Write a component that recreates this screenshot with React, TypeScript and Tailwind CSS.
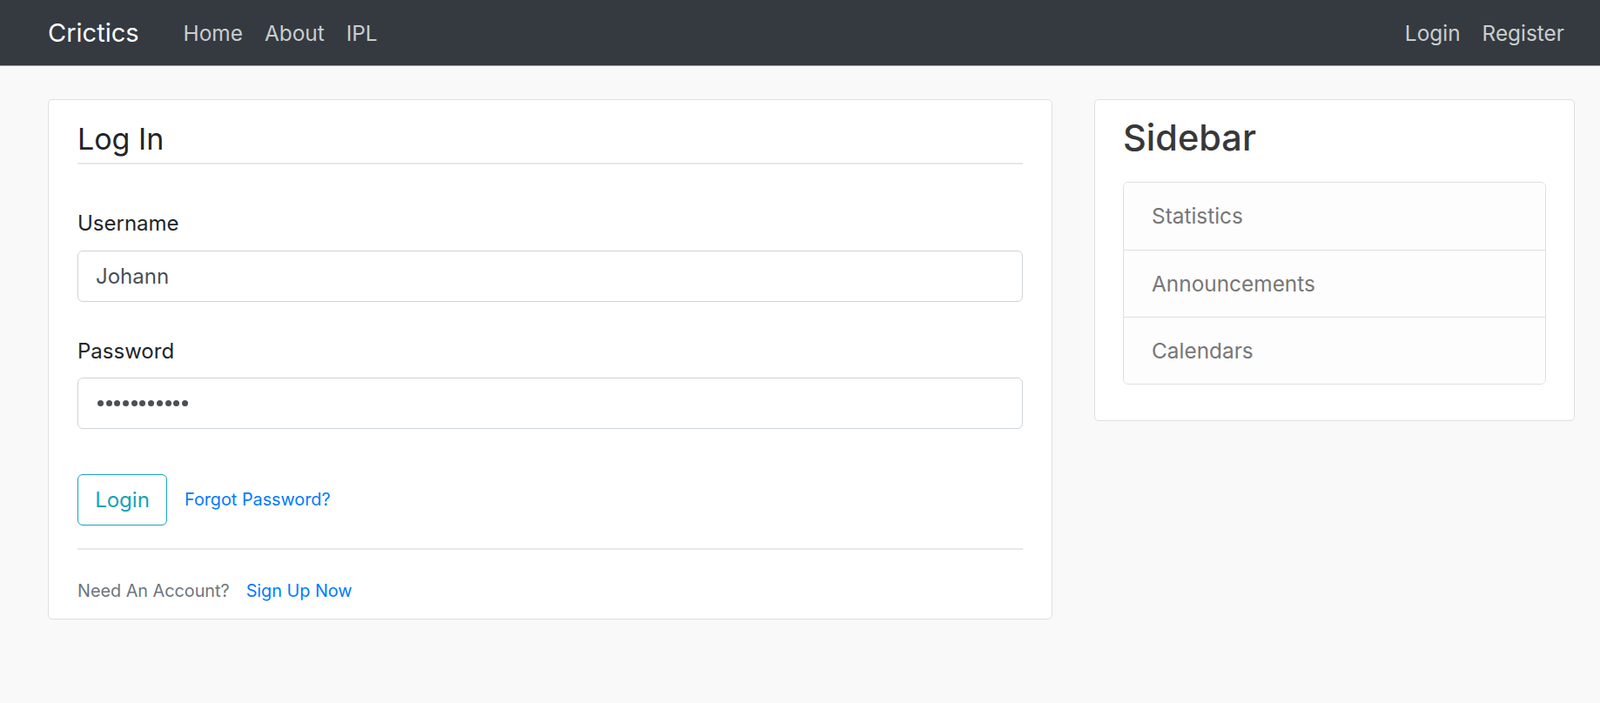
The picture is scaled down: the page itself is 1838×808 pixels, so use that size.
import React from 'react'

const font = { fontFamily: 'Inter, "Noto Sans", sans-serif' }

const navLinks = ['Home', 'About', 'IPL']
const sidebarItems = ['Statistics', 'Announcements', 'Calendars']

const Navbar = (): React.ReactNode => (
  <nav className="flex h-[76px] items-center justify-between border-b border-[#9a9da0] bg-[#343a40] pl-[55px] pr-[41px]">
    <div className="flex items-center">
      <span className="text-[29px] leading-[40px] text-white">Crictics</span>
      <div className="ml-[51px] flex items-center gap-[25px]">
        {navLinks.map((link) => (
          <a key={link} className="text-[24.4px] leading-[34px] text-[#cbcdce]" href="#">
            {link}
          </a>
        ))}
      </div>
    </div>
    <div className="flex items-center gap-[25px]">
      <a className="text-[24.4px] leading-[34px] text-[#cbcdce]" href="#">
        Login
      </a>
      <a className="text-[24.4px] leading-[34px] text-[#cbcdce]" href="#">
        Register
      </a>
    </div>
  </nav>
)

const PasswordDots = ({ count }: { count: number }): React.ReactNode => (
  <div className="flex items-center gap-[2.7px]">
    {Array.from({ length: count }).map((_, index) => (
      <span key={index} className="h-[7px] w-[7px] rounded-full bg-[#495057]" />
    ))}
  </div>
)

const LoginCard = (): React.ReactNode => (
  <div className="w-[1154px] rounded-[5px] border border-[#dfdfdf] bg-white px-[33px] pt-[23px] pb-[17px]">
    <div className="border-b-2 border-[#e7e8ea] pb-[5px] text-[34px] leading-[44px] text-[#212529]">Log In</div>
    <form>
      <label className="mt-[51px] block text-[24px] leading-[34px] text-[#212529]">Username</label>
      <input
        className="mt-[14px] block h-[59px] w-full rounded-[6px] border border-[#ced4da] px-[20px] text-[24px] text-[#495057] outline-none"
        defaultValue="Johann"
        type="text"
      />
      <label className="mt-[40px] block text-[24px] leading-[34px] text-[#212529]">Password</label>
      <div className="mt-[13px] flex h-[59px] w-full items-center rounded-[6px] border border-[#ced4da] px-[22px]">
        <PasswordDots count={11} />
      </div>
      <div className="mt-[52px] flex items-center">
        <button
          className="h-[59px] w-[103px] rounded-[6px] border border-[#17a2b8] text-[24px] text-[#17a2b8]"
          type="button"
        >
          Login
        </button>
        <a className="ml-[20px] text-[19.8px] text-[#007bff]" href="#">
          Forgot Password?
        </a>
      </div>
    </form>
    <div className="mt-[26px] border-t-2 border-[#e7e8ea]" />
    <div className="mt-[32px] flex items-center text-[19.8px] leading-[30px]">
      <span className="text-[#6c757d]">Need An Account?</span>
      <a className="ml-[19px] text-[#007bff]" href="#">
        Sign Up Now
      </a>
    </div>
  </div>
)

const SidebarCard = (): React.ReactNode => (
  <div className="w-[552px] rounded-[5px] border border-[#dfdfdf] bg-white pt-[20px] pr-[32px] pb-[41px] pl-[32px]">
    <h3 className="text-[41.5px] leading-[47px] font-medium text-[#383838]">Sidebar</h3>
    <div className="mt-[27px] overflow-hidden rounded-[6px] border border-[#dfdfdf]">
      {sidebarItems.map((item, index) => (
        <div
          key={item}
          className={`flex h-[77px] items-center bg-[#fdfdfd] px-[32px] text-[24.4px] text-[#777777] ${index > 0 ? 'border-t border-[#dfdfdf]' : ''}`}
        >
          {item}
        </div>
      ))}
    </div>
  </div>
)

const App = (): React.ReactNode => {
  return (
    <div className="min-h-[808px] bg-[#f9f9f9]" style={font}>
      <Navbar />
      <main className="flex items-start gap-[48px] pt-[38px] pl-[55px]">
        <LoginCard />
        <SidebarCard />
      </main>
    </div>
  )
}

export default App
